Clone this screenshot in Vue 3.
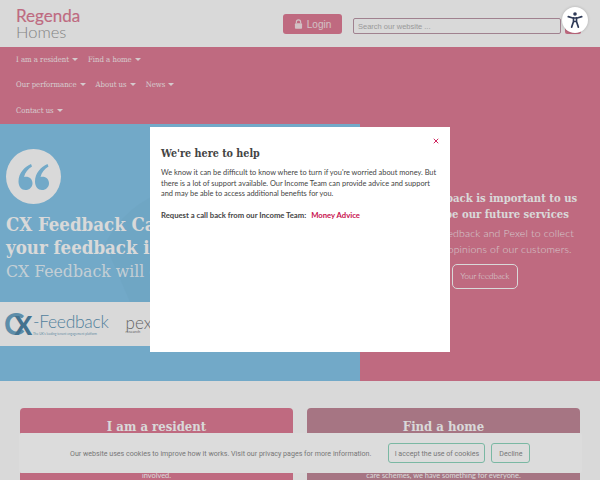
<template>
  <div class="page">
    <header class="topbar">
      <a class="logo">
        <span class="logo-top">Regenda</span>
        <span class="logo-bottom">Homes</span>
      </a>
      <div class="top-actions">
        <button class="login">
          <svg viewBox="0 0 12 14" class="lock">
            <path d="M3 6V4.2a3 3 0 0 1 6 0V6" fill="none" stroke="currentColor" stroke-width="1.6" />
            <rect x="1" y="6" width="10" height="7.5" rx="1.2" fill="currentColor" />
          </svg>
          Login
        </button>
        <input class="search" placeholder="Search our website ..." />
        <span class="search-btn"></span>
      </div>
    </header>

    <nav class="nav">
      <div v-for="(row, i) in navRows" :key="i" class="nav-row">
        <a v-for="item in row" :key="item" class="nav-item">{{ item }}<i class="caret"></i></a>
      </div>
    </nav>

    <section class="hero">
      <div class="hero-left">
        <svg class="swoosh" viewBox="0 0 360 257">
          <path d="M105 120 Q125 80 170 65 L170 178 L130 178 Z" fill="#5f93b3" />
        </svg>
        <div class="quote">
          <svg viewBox="0 0 32 28" class="quote-mark">
            <path d="M13.5 1C7 4 1 10 1 18.500 1 23.500 4 27 8 27s7-3 7-6.800c0-3.800-2.800-6.500-6.500-6.500-.8 0-1.500.1-2 .3C7.500 9.500 10.500 6 14.500 3.500z" />
            <path d="M30 1C23.500 4 17.500 10 17.500 18.500c0 5 3 8.500 7 8.500s7-3 7-6.800c0-3.800-2.800-6.500-6.500-6.500-.8 0-1.500.1-2 .3C24 9.500 27 6 31 3.500z" />
          </svg>
        </div>
        <div class="hero-copy">
          <h2>CX Feedback Can help<br />your feedback is heard</h2>
          <p>CX Feedback will collect</p>
        </div>
        <div class="logos">
          <div class="cx">
            <span class="cx-mark">C<b>X</b></span>
            <div>
              <span class="cx-name">-Feedback</span>
              <span class="cx-tag">The UK's leading tenant engagement platform</span>
            </div>
          </div>
          <div class="pexel">
            <span class="pexel-name">pexel</span>
            <span class="pexel-tag">research</span>
          </div>
        </div>
      </div>
      <div class="hero-right">
        <h3>Your feedback is important to us<br />and shape our future services</h3>
        <p>with CX Feedback and Pexel to collect<br />views and opinions of our customers.</p>
        <a class="outline-btn">Your feedback</a>
      </div>
    </section>

    <section class="cards">
      <article class="card resident">
        <h2>I am a resident</h2>
        <p>Find out about your home, your rent and repairs,<br />report a problem, pay online and see how to get<br />involved.</p>
      </article>
      <article class="card home">
        <h2>Find a home</h2>
        <p>From affordable rent to shared ownership and<br />homes for older people with extra care and<br />care schemes, we have something for everyone.</p>
      </article>
    </section>

    <div class="overlay">
      <div class="modal">
        <button class="close" aria-label="Close">
          <svg viewBox="0 0 8 8"><path d="M1 1l6 6M7 1L1 7" /></svg>
        </button>
        <h1>We're here to help</h1>
        <p>We know it can be difficult to know where to turn if you're worried about money. But there is a lot of support available. Our Income Team can provide advice and support and may be able to access additional benefits for you.</p>
        <p class="request">
          <strong>Request a call back from our Income Team:</strong>
          <a>Money Advice</a>
        </p>
      </div>
    </div>

    <div class="cookie">
      <span>Our website uses cookies to improve how it works. Visit our privacy pages for more information.</span>
      <button class="cookie-btn accept">I accept the use of cookies</button>
      <button class="cookie-btn decline">Decline</button>
    </div>

    <button class="a11y" aria-label="Accessibility">
      <svg viewBox="0 0 24 24">
        <circle cx="12" cy="4" r="2.400" />
        <path d="M3 7.500l6 1.800h6l6-1.800" fill="none" stroke-width="2.200" stroke-linecap="round" />
        <path d="M10 9v5l-2.500 7.500M14 9v5l2.500 7.500M10 14h4" fill="none" stroke-width="2.200" stroke-linecap="round" />
      </svg>
    </button>
  </div>
</template>

<script setup>
const navRows = [
  ['I am a resident', 'Find a home'],
  ['Our performance', 'About us', 'News'],
  ['Contact us'],
]
</script>

<style>
html, body {
  margin: 0;
  overflow: hidden;
  height: 480px;
}
</style>

<style scoped>
.page {
  position: relative;
  width: 600px;
  height: 480px;
  overflow: hidden;
  background: #fff;
  font-family: 'Lato', 'Liberation Sans', sans-serif;
}

.topbar {
  height: 47px;
  display: flex;
  justify-content: space-between;
  padding: 0 19px 0 16px;
  box-sizing: border-box;
  background: #fff;
}

.logo {
  display: flex;
  flex-direction: column;
  padding-top: 8px;
}

.logo-top {
  font: 400 17px/16px 'Lato', sans-serif;
  color: #e17d97;
  -webkit-text-stroke: 0.15px #e17d97;
}

.logo-bottom {
  font: 300 16.500px/16px 'Lato', sans-serif;
  color: #9b9b9b;
}

.top-actions {
  display: flex;
  align-items: flex-start;
}

.login {
  width: 59px;
  height: 20px;
  margin-top: 14px;
  border: 0;
  border-radius: 3px;
  padding: 0;
  background: #e17d97;
  color: #f7e3e8;
  font: 400 10px 'Liberation Sans', sans-serif;
  display: flex;
  align-items: center;
  justify-content: center;
  gap: 4px;
}

.lock {
  width: 9px;
  height: 10px;
}

.search {
  width: 208px;
  height: 16px;
  margin: 18px 0 0 11px;
  box-sizing: border-box;
  border: 1px solid #bd98a8;
  border-radius: 2px;
  background: #fff;
  padding: 0 4px;
  font: 400 7.500px 'Liberation Sans', sans-serif;
  outline: none;
}

.search::placeholder {
  color: #b5b5b5;
}

.search-btn {
  width: 16px;
  height: 14px;
  margin: 20px 0 0 4px;
  border-radius: 2px;
  background: #e17d97;
}

.nav {
  height: 77px;
  background: #e17d97;
  padding: 0 16px;
  box-sizing: border-box;
}

.nav-row {
  height: 25.300px;
  display: flex;
  align-items: center;
  gap: 10px;
}

.nav-item {
  display: flex;
  align-items: center;
  gap: 3px;
  font: 400 7.700px 'DejaVu Serif Condensed', 'DejaVu Serif', serif;
  font-stretch: condensed;
  color: #fbeef1;
}

.caret {
  width: 0;
  height: 0;
  border: 3px solid transparent;
  border-top: 3px solid #fbeef1;
  border-bottom: 0;
}

.hero {
  height: 257px;
  display: flex;
}

.hero-left {
  position: relative;
  width: 360px;
  background: #86c7eb;
  overflow: hidden;
}

.swoosh {
  position: absolute;
  inset: 0;
  width: 360px;
  height: 257px;
  opacity: 0.06;
}

.quote {
  position: relative;
  width: 55px;
  height: 55px;
  margin: 25px 0 0 6px;
  border-radius: 50%;
  background: #fff;
  display: flex;
  align-items: center;
  justify-content: center;
}

.quote-mark {
  width: 33px;
  height: 28px;
  fill: #86c7eb;
}

.hero-copy {
  position: relative;
  margin: 9px 0 0 6px;
  color: #fff;
  white-space: nowrap;
}

.hero-copy h2 {
  margin: 0;
  font: 700 18.500px/23px 'DejaVu Serif Condensed', 'DejaVu Serif', serif;
  font-stretch: condensed;
}

.hero-copy p {
  margin: 0;
  font: 400 17.500px/25px 'DejaVu Serif Condensed', 'DejaVu Serif', serif;
  font-stretch: condensed;
  opacity: 0.8;
}

.logos {
  position: relative;
  height: 44px;
  margin-top: 18px;
  background: #fff;
  display: flex;
  align-items: center;
  padding-left: 4px;
  gap: 17px;
}

.cx {
  display: flex;
  align-items: center;
}

.cx-mark {
  font: 700 31px/30px 'Lato', sans-serif;
  color: #6ea6c7;
  letter-spacing: -10px;
  width: 29px;
}

.cx-mark b {
  color: #4f86a8;
  font-size: 26px;
}

.cx-name {
  display: block;
  font: 300 17.500px/20px 'Lato', sans-serif;
  color: #5f97b8;
  letter-spacing: -0.3px;
}

.cx-tag {
  display: block;
  font: 400 3.200px/5px 'Lato', sans-serif;
  color: #7aa9c4;
  white-space: nowrap;
}

.pexel-name {
  display: block;
  font: 300 17px/15px 'Lato', sans-serif;
  color: #777;
}

.pexel-tag {
  display: block;
  font: 400 4px/4px 'Lato', sans-serif;
  color: #777;
}

.hero-right {
  width: 240px;
  background: #e17d97;
  color: #fff;
  padding-top: 66px;
  box-sizing: border-box;
  display: flex;
  flex-direction: column;
  align-items: center;
  white-space: nowrap;
}

.hero-right h3 {
  margin: 0 0 0 10px;
  font: 700 11.200px/16px 'DejaVu Serif Condensed', 'DejaVu Serif', serif;
  font-stretch: condensed;
  text-align: center;
}

.hero-right p {
  margin: 3px 0 0 10px;
  font: 300 10.500px/16px 'Lato', sans-serif;
  letter-spacing: 0.15px;
  opacity: 0.85;
  text-align: center;
}

.outline-btn {
  margin: 7px 0 0 10px;
  width: 66px;
  height: 25px;
  box-sizing: border-box;
  border: 1px solid #fff;
  border-radius: 5px;
  font: 300 8px/23px 'Lato', sans-serif;
  text-align: center;
}

.cards {
  display: grid;
  grid-template-columns: 273px 273px;
  gap: 14px;
  padding: 27px 20px 0;
}

.card {
  height: 100px;
  border-radius: 4px;
  color: #fff;
  text-align: center;
  padding: 9px 14px 0;
  box-sizing: border-box;
}

.resident {
  background: #e17d97;
}

.home {
  background: #c48a9b;
}

.card h2 {
  margin: 0;
  font: 700 13px/20px 'DejaVu Serif Condensed', 'DejaVu Serif', serif;
  font-stretch: condensed;
}

.card p {
  margin: 11px 0 0;
  font: 400 7.400px/11px 'Lato', sans-serif;
}

.cookie {
  position: absolute;
  left: 19px;
  top: 433px;
  width: 563px;
  height: 40px;
  box-sizing: border-box;
  background: #dcdcdc;
  border-radius: 2px;
  display: flex;
  align-items: center;
}

.cookie span {
  margin: 0 17px 0 51px;
  font: 400 7.100px 'Roboto', sans-serif;
  color: #777;
  white-space: nowrap;
}

.cookie-btn {
  height: 20px;
  padding: 0;
  border: 1px solid #7ab8a3;
  border-radius: 3px;
  background: transparent;
  color: #777;
  font: 400 7.100px 'Roboto', sans-serif;
}

.accept {
  width: 97px;
  margin-right: 6px;
}

.decline {
  width: 39px;
}

.overlay {
  position: absolute;
  inset: 0;
  background: rgba(0, 0, 0, 0.15);
}

.modal {
  position: absolute;
  left: 150px;
  top: 127px;
  width: 300px;
  height: 225px;
  box-sizing: border-box;
  padding: 19px 11px;
  background: #fff;
  color: #444;
}

.modal h1 {
  margin: 0 0 7px;
  font: 700 10.700px/15px 'DejaVu Serif Condensed', 'DejaVu Serif', serif;
  font-stretch: condensed;
}

.modal p {
  margin: 0;
  font: 400 7.400px/10.700px 'Lato', sans-serif;
}

.modal .request {
  margin-top: 10px;
  font-size: 7.700px;
}

.request strong {
  font-weight: 700;
  margin-right: 5px;
}

.request a {
  color: #c8104e;
  font-weight: 700;
}

.close {
  position: absolute;
  top: 10px;
  right: 10px;
  width: 8px;
  height: 8px;
  padding: 0;
  border: 0;
  background: none;
}

.close svg {
  display: block;
  width: 6px;
  height: 6px;
  margin: 1px;
  stroke: #c8104e;
  stroke-width: 1.200;
  fill: none;
}

.a11y {
  position: absolute;
  left: 562px;
  top: 7px;
  width: 26px;
  height: 26px;
  padding: 4px;
  border: 0;
  border-radius: 50%;
  background: #fff;
  box-shadow: 0 0 3px rgba(0, 0, 0, 0.2);
}

.a11y svg {
  display: block;
  width: 18px;
  height: 18px;
  fill: #2f3a57;
  stroke: #2f3a57;
}

.a11y circle {
  stroke: none;
}
</style>
